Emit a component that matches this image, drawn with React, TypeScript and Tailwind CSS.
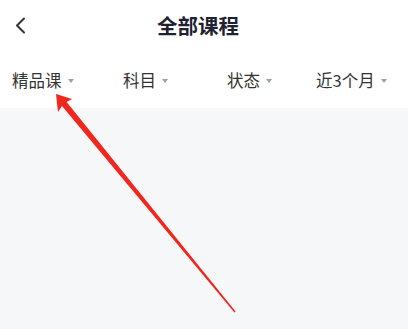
import React from "react";

const Caret = () => (
  <span className="ml-[6px] mt-[1px] inline-block h-0 w-0 border-x-[3px] border-t-[4px] border-x-transparent border-t-[#a0a0a0]" />
);

const Filter = ({ label }: { label: string }) => (
  <div className="flex items-center text-[16.5px] leading-none text-[#333333]">
    <span>{label}</span>
    <Caret />
  </div>
);

export default function App() {
  return (
    <div
      className="relative h-[329px] w-[408px] overflow-hidden bg-white"
      style={{ fontFamily: '"Noto Sans CJK SC", "Noto Sans", sans-serif' }}
    >
      <header className="relative flex h-[52px] items-center justify-center pr-[12px] pb-[2px]">
        <div className="absolute left-[14px] top-[17px]">
          <svg width="12" height="17" viewBox="0 0 12 17" fill="none">
            <path d="M10 1.5 L3 8.5 L10 15.5" stroke="#333" strokeWidth="2" strokeLinecap="round" strokeLinejoin="round" />
          </svg>
        </div>
        <h1 className="text-[20.5px] font-bold text-[#1e2230]">全部课程</h1>
      </header>
      <div className="grid h-[56px] grid-cols-[111px_104px_89px_1fr] items-center pl-[12px]">
        <Filter label="精品课" />
        <Filter label="科目" />
        <Filter label="状态" />
        <Filter label="近3个月" />
      </div>
      <div className="h-[221px] bg-[#f6f7f9]" />
      <svg className="pointer-events-none absolute left-0 top-0" width="408" height="329" viewBox="0 0 408 329">
        <polygon
          points="56,94 72,99 66.6,102.1 235.6,311.6 234.4,312.4 62,105.9 58,112"
          fill="#f2261d"
        />
      </svg>
    </div>
  );
}
